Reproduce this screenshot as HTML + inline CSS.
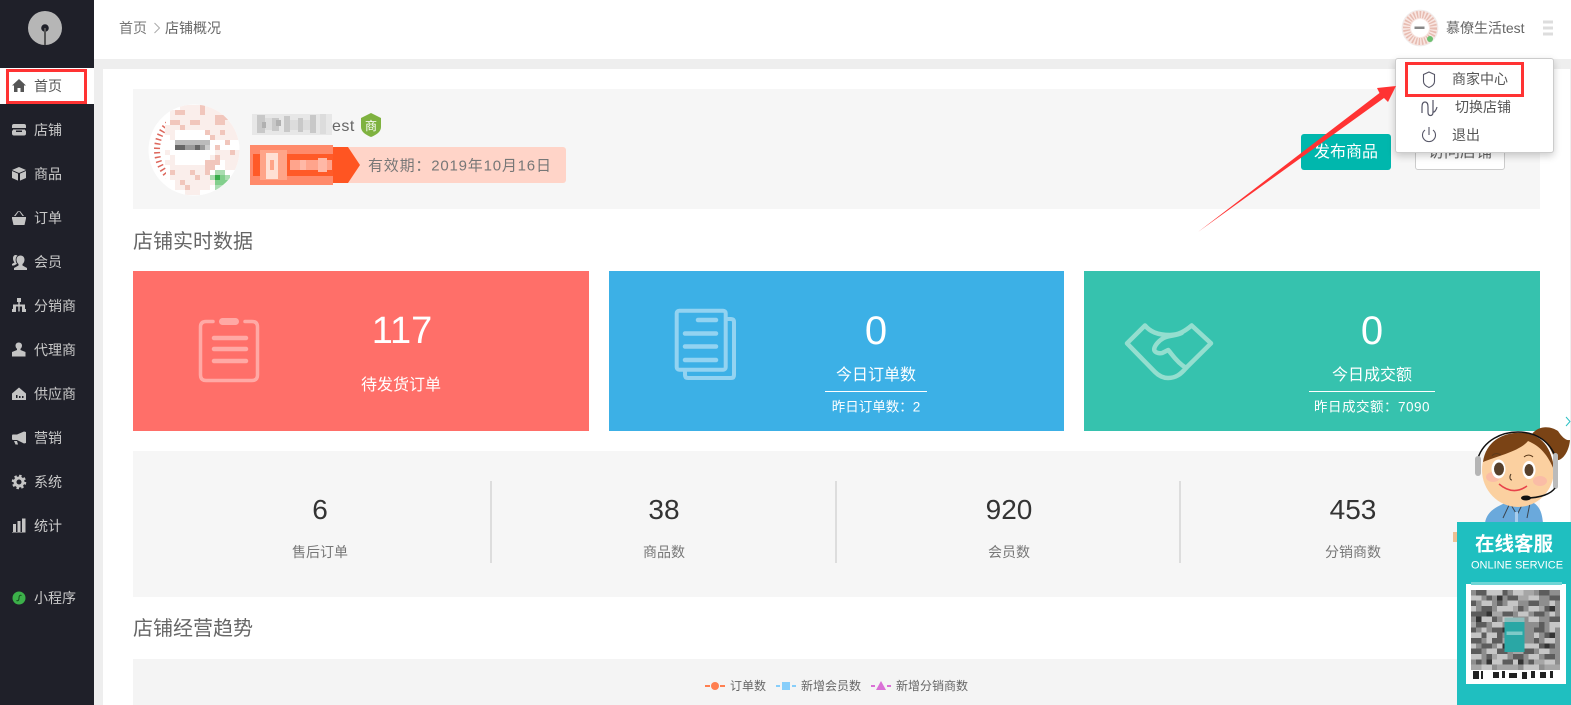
<!DOCTYPE html>
<html lang="zh"><head><meta charset="utf-8"><title>店铺概况</title>
<style>
*{box-sizing:border-box}
html,body{margin:0;padding:0;width:1571px;height:705px;overflow:hidden;background:#eee;font-family:"Liberation Sans","Noto Sans CJK SC",sans-serif}
.a{position:absolute}
.t{position:absolute;white-space:nowrap;line-height:1;transform:translateY(-50%)}
.c{position:absolute;white-space:nowrap;line-height:1;transform:translate(-50%,-50%)}
.m{font-size:14px;color:#c9c9c9;left:34px}
.w{color:#fff}
svg{position:absolute;left:0;top:0;overflow:visible}
</style></head><body>

<div class="a" style="left:103px;top:69px;width:1468px;height:636px;background:#fff"></div>
<div class="a" style="left:94px;top:0;width:1477px;height:59px;background:#fff"></div>
<div class="a" style="left:1570px;top:69px;width:1px;height:636px;background:#eee"></div>
<div class="a" style="left:0;top:0;width:94px;height:705px;background:#1f2029"></div>
<div class="a" style="left:0;top:68px;width:94px;height:36px;background:#fff"></div>
<div class="a" style="left:6px;top:69px;width:81px;height:35px;border:3px solid #f33"></div>

<div class="t m" style="top:86px;color:#555">首页</div>
<div class="t m" style="top:130px">店铺</div>
<div class="t m" style="top:174px">商品</div>
<div class="t m" style="top:218px">订单</div>
<div class="t m" style="top:262px">会员</div>
<div class="t m" style="top:306px">分销商</div>
<div class="t m" style="top:350px">代理商</div>
<div class="t m" style="top:394px">供应商</div>
<div class="t m" style="top:438px">营销</div>
<div class="t m" style="top:482px">系统</div>
<div class="t m" style="top:526px">统计</div>
<div class="t m" style="top:598px">小程序</div>

<div class="t" style="left:119px;top:28px;font-size:14px;color:#777">首页</div>
<svg width="1571" height="705" style="pointer-events:none"><path d="M154.500 23l5 5-5 5" fill="none" stroke="#aaa" stroke-width="1"/></svg>
<div class="t" style="left:165px;top:28px;font-size:14px;color:#666">店铺概况</div>
<div class="t" style="left:1446px;top:28px;font-size:14px;color:#666">慕僚生活test</div>

<!-- panels -->
<div class="a" style="left:133px;top:89px;width:1407px;height:120px;background:#f6f6f6"></div>
<div class="a" style="left:250px;top:147px;width:316px;height:36px;background:#ffd4c8;border-radius:3px"></div>
<div class="t" style="left:368px;top:166px;font-size:15px;letter-spacing:.8px;color:#777">有效期：2019年10月16日</div>
<div class="t" style="left:332px;top:127px;font-size:16px;letter-spacing:.5px;color:#666">est</div>
<div class="a" style="left:1301px;top:134px;width:90px;height:36px;background:#00b7ad;border-radius:3px"></div>
<div class="c w" style="left:1346px;top:153px;font-size:16px">发布商品</div>
<div class="a" style="left:1415px;top:134px;width:90px;height:36px;background:#fff;border:1px solid #ccc;border-radius:3px"></div>
<div class="c" style="left:1460px;top:153px;font-size:16px;color:#666">访问店铺</div>

<div class="t" style="left:133px;top:242px;font-size:20px;color:#666">店铺实时数据</div>
<div class="a" style="left:133px;top:271px;width:456px;height:160px;background:#ff6f69"></div>
<div class="a" style="left:609px;top:271px;width:455px;height:160px;background:#3cb0e6"></div>
<div class="a" style="left:1084px;top:271px;width:456px;height:160px;background:#36c2ae"></div>

<div class="c w" style="left:402px;top:331px;font-size:38px">117</div>
<div class="c w" style="left:401px;top:386px;font-size:16px">待发货订单</div>
<div class="c w" style="left:876px;top:331px;font-size:40px">0</div>
<div class="c w" style="left:876px;top:376px;font-size:16px">今日订单数</div>
<div class="a" style="left:825px;top:391px;width:102px;height:1px;background:#fff"></div>
<div class="c w" style="left:876px;top:407px;font-size:13.500px">昨日订单数：2</div>
<div class="c w" style="left:1372px;top:331px;font-size:40px">0</div>
<div class="c w" style="left:1372px;top:376px;font-size:16px">今日成交额</div>
<div class="a" style="left:1309px;top:391px;width:126px;height:1px;background:#fff"></div>
<div class="c w" style="left:1372px;top:407px;font-size:13.500px;letter-spacing:.5px">昨日成交额：7090</div>

<div class="a" style="left:133px;top:451px;width:1407px;height:146px;background:#f6f6f6"></div>
<div class="a" style="left:490px;top:481px;width:2px;height:82px;background:#ddd"></div>
<div class="a" style="left:835px;top:481px;width:2px;height:82px;background:#ddd"></div>
<div class="a" style="left:1179px;top:481px;width:2px;height:82px;background:#ddd"></div>
<div class="c" style="left:320px;top:510px;font-size:28px;color:#333">6</div>
<div class="c" style="left:664px;top:510px;font-size:28px;color:#333">38</div>
<div class="c" style="left:1009px;top:510px;font-size:28px;color:#333">920</div>
<div class="c" style="left:1353px;top:510px;font-size:28px;color:#333">453</div>
<div class="c" style="left:320px;top:552px;font-size:14px;color:#777">售后订单</div>
<div class="c" style="left:664px;top:552px;font-size:14px;color:#777">商品数</div>
<div class="c" style="left:1009px;top:552px;font-size:14px;color:#777">会员数</div>
<div class="c" style="left:1353px;top:552px;font-size:14px;color:#777">分销商数</div>

<div class="t" style="left:133px;top:629px;font-size:20px;color:#666">店铺经营趋势</div>
<div class="a" style="left:133px;top:659px;width:1407px;height:46px;background:#f4f4f4"></div>
<div class="t" style="left:730px;top:686px;font-size:12px;color:#666">订单数</div>
<div class="t" style="left:801px;top:686px;font-size:12px;color:#666">新增会员数</div>
<div class="t" style="left:896px;top:686px;font-size:12px;color:#666">新增分销商数</div>

<!-- main graphics -->
<svg width="1571" height="705" viewBox="0 0 1571 705">
 <defs><clipPath id="av"><circle cx="194" cy="150" r="45.500"/></clipPath></defs>
 <!-- logo -->
 <circle cx="45" cy="28" r="17" fill="#b6b6b6"/>
 <circle cx="45" cy="28" r="3.800" fill="#1f2029"/><rect x="44" y="28" width="2" height="17" fill="#555"/>

 <!-- sidebar icons -->
 <path d="M19 79l-7 6.500h2v6.500h3.500v-4h3v4H24v-6.500h2z" fill="#555"/>
 <g fill="#c4c4c4">
  <path d="M14 124h10q2 0 2 2v2H12v-2q0-2 2-2zM13 129.500h12v1h1v3q0 2-2 2H14q-2 0-2-2v-3h1zM16 130.500v1.500h6v-1.500z"/>
  <path d="M19 167l7 3-7 3-7-3zM12 171l6 2.600v7l-6-2.600zM26 171l-6 2.600v7l6-2.600z"/>
  <path d="M12 217h14v1.500l-1.500 6.500h-11L12 218.500zM14 216l4-5h1l-3.500 5zM24 216l-4-5h-1l3.500 5z"/>
  <path d="M20.500 255.500c2.600 0 4 2 4 4.200 0 2-1 3.500-2 4.300v1.500l4.500 2.500v2H14v-2l4.500-2.500V264c-1-.8-2-2.300-2-4.300 0-2.200 1.400-4.200 4-4.200zM15.500 255c1 0 1.500.3 2 .8-1.500 1-2 3-1.800 4.800.1 1 .6 2.400 1.300 3.300l-3 1.600H12v-1.500l2.500-1.600C13.500 261.500 13 260 13 258.500c0-2 1-3.500 2.500-3.500z"/>
  <path d="M17 298h4v4h-1.300v2.500H25v7h-3v-5h-2.300v5h-1.400v-5H16v5h-3v-7h5.300V302H17zM12 309h4v3h-4zM22 309h4v3h-4z"/>
  <path d="M19 342.500a3 3 0 0 1 3 3c0 1.500-.7 2.600-1.500 3.300v1.200l5 2V356.500H12V352l5-2v-1.200c-.8-.7-1.500-1.800-1.500-3.300a3 3 0 0 1 3-3z"/>
  <path d="M19 387.500l7 6v6.500H12v-6.500zM16 395v3h1.500v-3zM19 396v2h1.500v-2zM22 396v2h1.500v-2z" fill-rule="evenodd"/>
  <path d="M24 431.500l2 .5v11l-2 .5-7-3.500h-4.500l-.5-1v-3.500l.5-1H17zM14 441h3l1 3.500h-2.500z"/>
  <circle cx="19" cy="482" r="4" fill="none" stroke="#c4c4c4" stroke-width="3"/>
  <circle cx="19" cy="482" r="6" fill="none" stroke="#c4c4c4" stroke-width="2.500" stroke-dasharray="2.400 2.300"/>
  <path d="M13 524h3v8h-3zM17.500 521h3v11h-3zM22 518.500h3.500V532H22z"/>
 </g>
 <path d="M12 532.500h13.500v.5H12z" fill="#c4c4c4"/>
 <circle cx="19" cy="598" r="6.500" fill="#3cb04a"/>
 <path d="M21.500 595.500c-2-1-2.500 1-2.500 2.500s-.5 3.500-2.500 2.500" fill="none" stroke="#154f1c" stroke-width="1"/>

 <!-- hamburger -->
 <path d="M1543 22h10M1543 28h10M1543 34h10" stroke="#ddd" stroke-width="3"/>
 <!-- top avatar -->
 <circle cx="1420" cy="28" r="18" fill="#f8e6e2" stroke="#eee" stroke-width=".8"/>
 <circle cx="1420" cy="28" r="13.500" fill="none" stroke="#e0a99c" stroke-width="7" stroke-dasharray="1.500 1.500" opacity=".7"/>
 <circle cx="1420" cy="28" r="9" fill="#fff"/><rect x="1414.500" y="26.500" width="10" height="2.500" fill="#888"/>
 <circle cx="1430" cy="39" r="3" fill="#6cc070"/>

 <!-- big avatar -->
 <circle cx="194" cy="150" r="45.500" fill="#fff"/>
 <path d="M149 150a45 45 0 0 1 8-25" fill="none"/>
 <circle cx="194" cy="150" r="37" fill="none" stroke="#d9574a" stroke-width="6" stroke-dasharray="1.500 3" opacity=".9"/>
 <g clip-path="url(#av)">
 <rect x="166" y="105" width="74" height="90" fill="#fff"/>
 <g fill="none" stroke-width="5">
  <path stroke="#faeeeb" d="M180 107.500h40M170 112.500h60M170 117.500h65M170 122.500h70M165 127.500h75M165 132.500h10M210 132.500h30M170 137.500h5M215 137.500h25M165 152.500h5M215 152.500h25M170 157.500h5M210 157.500h30M165 162.500h10M225 162.500h15M170 167.500h35M225 167.500h15M175 172.500h35M170 177.500h45M175 182.500h40M175 187.500h35M185 192.500h15"/>
  <path stroke="#f1c6bc" d="M175 112.500h10M200 107.500h5M200 112.500h5M215 117.500h15M170 122.500h10M190 122.500h10M215 122.500h10M180 127.500h5M205 132.500h5M220 132.500h5M210 137.500h5M225 142.500h5M215 147.500h5M230 152.500h5M215 157.500h5M205 162.500h15M205 167.500h10M170 172.500h5M190 172.500h5M205 172.500h5M180 182.500h5M195 177.500h5M185 187.500h5"/>
  <path stroke="#bbb" d="M175 142.500h35"/><path stroke="#666" d="M175 147.500h10M195 147.500h5"/><path stroke="#999" d="M185 147.500h10M200 147.500h5"/><path stroke="#ccc" d="M205 147.500h5"/>
  <path stroke="#a9dcb0" d="M215 172.500h10M210 177.500h5M225 177.500h5M215 187.500h10"/>
  <path stroke="#82cf8c" d="M215 182.500h15M220 177.500h5"/><path stroke="#36ad4a" d="M215 177.500h5"/>
 </g>
 </g>

 <!-- name mosaic -->
 <g><rect x="252" y="114" width="80" height="21" fill="#e7e7e7"/>
  <path d="M257 115h8v18h-8zM272 118h7v13h-7zM284 116h6v16h-6zM298 118h5v14h-5zM310 115h6v18h-6z" fill="#c8c8c8"/>
  <path d="M265 118h7v12h-7zM290 120h8v10h-8zM303 120h7v10h-7zM320 114h6v20h-6z" fill="#dcdcdc"/>
  <path d="M276 120h5v6h-5zM262 122h4v6h-4z" fill="#b0b0b0"/>
 </g>
 <path d="M371 113l10 5v9c0 5-5 8-10 10-5-2-10-5-10-10v-9z" fill="#7fb240"/>

 <!-- version badge -->
 <path d="M250 147h98l12 18-12 18h-98z" fill="#ff5522"/>
 <rect x="250" y="145" width="83" height="40" fill="#ff8a6b"/>
 <rect x="253" y="154" width="80" height="22" fill="#ff5a28"/>
 <rect x="260" y="150" width="27" height="30" fill="#ffa488"/>
 <rect x="266" y="153" width="12" height="26" fill="#ffe0d4"/><rect x="270" y="160" width="4" height="10" fill="#ffa488"/>
 <rect x="290" y="160" width="42" height="10" fill="#ffa48c"/>
 <path d="M300 160h6v10h-6zM318 158h9v14h-9z" fill="#ffb8a6"/>

 <!-- clipboard -->
 <g fill="none" stroke="#ffa9a5" stroke-width="3.500" stroke-linecap="round" stroke-linejoin="round">
  <path d="M213 321.500h-7q-5.500 0-5.500 5.500v48q0 5.500 5.500 5.500h46q5.500 0 5.500-5.500v-48q0-5.500-5.500-5.500h-7"/>
 </g>
 <rect x="219" y="318" width="20" height="7" rx="3.500" fill="#ffa9a5"/>
 <path d="M214 338h32M214 349h32M214 361h32" stroke="#ffa9a5" stroke-width="4.500" stroke-linecap="round"/>

 <!-- docs -->
 <g fill="none" stroke="#93d3f1" stroke-width="4" stroke-linejoin="round">
  <rect x="676.700" y="310.700" width="49" height="59" rx="2.500"/>
  <path d="M727 319h4q3 0 3 3v53q0 3-3 3h-43q-3 0-3-3v-4"/>
 </g>
 <path d="M698 320h18M685 333.500h31M685 346.500h31M685 360h31" stroke="#93d3f1" stroke-width="4.500" stroke-linecap="round"/>

 <!-- handshake -->
 <g fill="none" stroke="#94decf" stroke-width="4.500" stroke-linejoin="round" stroke-linecap="round">
  <path d="M1127 343.300L1145 325.500c5 6 12 9.500 25 9.500 9 0 15-4 21.700-9.500L1211 343.300 1186 368c-5 6-10 10-18 10-5 0-9-2-13-6z"/>
  <path d="M1181.700 333c-6 3-12 2-18 5-4 2-9 7-9.500 11-.3 3 4 5 8 4l6-3c3 3 8 12 18 18"/>
 </g>

 <!-- legend -->
 <path d="M705 686h5M720 686h5" stroke="#ff7f50" stroke-width="2"/><circle cx="715" cy="686" r="4" fill="#ff7f50"/>
 <path d="M776 686h4M792 686h4" stroke="#87cefa" stroke-width="2"/><rect x="782" y="682" width="8" height="8" fill="#87cefa"/>
 <path d="M871 686h4M887 686h4" stroke="#da70d6" stroke-width="2"/><path d="M881 681l5 9h-10z" fill="#da70d6"/>
</svg>

<!-- dropdown -->
<div class="a" style="left:1395px;top:58px;width:159px;height:95px;background:#fff;border:1px solid #ccc;border-radius:3px;box-shadow:0 3px 8px rgba(0,0,0,.2)"></div>
<div class="a" style="left:1405px;top:62px;width:119px;height:35px;border:3px solid #f33"></div>
<div class="t" style="left:1452px;top:79px;font-size:14px;color:#555">商家中心</div>
<div class="t" style="left:1455px;top:107px;font-size:14px;color:#555">切换店铺</div>
<div class="t" style="left:1452px;top:135px;font-size:14px;color:#555">退出</div>

<svg width="1571" height="705" viewBox="0 0 1571 705">
 <path d="M1429 72l5.500 2.500v7c0 3-3 5-5.500 6-2.500-1-5.500-3-5.500-6v-7z" fill="none" stroke="#556" stroke-width="1.100"/>
 <path d="M1422 113v-6c0-3 1-5 3-5s3 2 3 5v5c0 2.500 1 3.500 2.500 3.500s2.500-1 2.500-3.500v-12M1433 112c1 .5 3-1 4-5" fill="none" stroke="#556" stroke-width="1.200"/>
 <path d="M1425 130a6.500 6.500 0 1 0 8 0M1429 127v8" fill="none" stroke="#556" stroke-width="1.100"/>
 <!-- red arrow -->
 <path d="M1198 232L1379.500 93 1377 88 1396 86 1388 102 1384 98z" fill="#f33"/>
</svg>

<!-- service widget -->
<svg width="1571" height="705" viewBox="0 0 1571 705">
 <path d="M1566 417l4 4.500-4 4.500" fill="none" stroke="#2cc0c4" stroke-width="1"/>
 <!-- ponytail -->
 <path d="M1532 434C1540 424 1552 427 1558 431 1562 437 1566 441 1570 440 1569 452 1562 462 1555 460 1551 448 1545 438 1532 434Z" fill="#7a4315"/>
 <!-- body -->
 <path d="M1485 523C1487 510 1498 506 1510 501L1530 501C1540 505 1542 513 1543 523Z" fill="#6aa9dc"/>
 <path d="M1510 503l-7 15M1510 503l7 12 6-12M1530 503l-3 15" fill="none" stroke="#3c4650" stroke-width="1"/>
 <path d="M1515 512h3v10h-3z" fill="#a9cdec"/>
 <!-- head -->
 <ellipse cx="1518" cy="470" rx="36" ry="37" fill="#fbd0a0"/>
 <path d="M1483 462C1486 440 1505 431 1525 433 1541 435 1552 447 1554 470 1548 455 1540 446 1528 441 1520 451 1498 456 1483 462Z" fill="#7a4315"/>
 <path d="M1478 458C1484 440 1502 432 1518 432 1537 432 1550 442 1556 458" fill="none" stroke="#111" stroke-width="1.500"/>
 <rect x="1475" y="456" width="6" height="20" rx="3" fill="#b5b5b5"/>
 <rect x="1553" y="453" width="5" height="36" rx="2.500" fill="#bbb"/>
 <path d="M1555 488C1551 494 1540 498 1526 498" fill="none" stroke="#111" stroke-width="1.500"/>
 <ellipse cx="1526" cy="498" rx="5" ry="2.500" fill="#111"/>
 <ellipse cx="1493" cy="477" rx="7" ry="5" fill="#f9b3a8" opacity=".7"/>
 <ellipse cx="1540" cy="481" rx="7" ry="5" fill="#f9b3a8" opacity=".7"/>
 <ellipse cx="1498.500" cy="469" rx="7" ry="9.500" fill="#fff"/>
 <ellipse cx="1529" cy="470" rx="6.500" ry="9" fill="#fff"/>
 <ellipse cx="1499" cy="469" rx="5" ry="6.500" fill="#57402b"/>
 <ellipse cx="1529" cy="470" rx="4.500" ry="6" fill="#57402b"/>
 <path d="M1492 456c2-3 6-3 9-1M1524 457c2-2 6-3 9 0" fill="none" stroke="#5c3a1a" stroke-width="1"/>
 <path d="M1511 474c-2 3-1 6 1 6" fill="none" stroke="#4a3520" stroke-width="1"/>
 <path d="M1499 484Q1513 496 1527 486" fill="none" stroke="#e8424a" stroke-width="1.500"/>
 <!-- hand -->
 <path d="M1453 532h5v10h-5z" fill="#eec093"/>
 <!-- panel -->
 <rect x="1457" y="522" width="114" height="183" fill="#1fbfc0"/>
 <rect x="1466" y="584" width="100" height="100" fill="#fff"/>
 <rect x="1471" y="582" width="91" height="3" fill="#6fd5d5"/>
 <path d="M1473 671h6v8h-6zM1481 671h2v8h-2zM1493 672h6v6h-6zM1502 671h3v7h-3zM1509 673h8v5h-8zM1522 672h5v7h-5zM1531 671h4v7h-4zM1540 672h6v6h-6zM1550 671h3v7h-3z" fill="#222"/>
</svg>

<svg style="left:1471px;top:590px" width="89" height="80" viewBox="0 0 17 15" preserveAspectRatio="none" shape-rendering="crispEdges">
 <rect width="17" height="15" fill="#8e8e8e"/>
 <g fill="none" stroke-width="1">
  <path stroke="#5c5c5c" d="M1 .5h2M6 .5h1M13 .5h2M3 1.500h1M7 1.500h2M15 1.500h2M0 2.500h1M5 2.500h1M11 2.500h2M2 3.500h2M9 3.500h1M14 3.500h1M0 4.500h3M6 4.500h2M12 4.500h2M4 5.500h1M15 5.500h2M1 6.500h2M13 6.500h1M0 7.500h1M4 7.500h2M12 7.500h2M2 8.500h1M5 8.500h1M14 8.500h2M0 9.500h2M4 9.500h2M12 9.500h1M2 10.500h2M7 10.500h2M13 10.500h3M0 11.500h2M5 11.500h2M10 11.500h2M3 12.500h1M8 12.500h2M14 12.500h2M1 13.500h1M6 13.500h2M11 13.500h2"/>
  <path stroke="#333" d="M5 1.500h1M15 3.500h1M1 5.500h1M3 4.500h1M6 7.500h1M15 8.500h1M6 10.500h1M14 10.500h1M3 13.500h1M9 13.500h1"/>
  <path stroke="#c6c6c6" d="M3 .5h3M8 .5h2M0 1.500h2M11 1.500h2M2 2.500h2M7 2.500h2M15 2.500h1M5 3.500h3M11 3.500h2M0 3.500h1M9 4.500h2M15 4.500h1M2 5.500h2M6 5.500h2M11 5.500h2M4 6.500h2M15 6.500h2M2 7.500h1M15 7.500h1M0 8.500h2M3 8.500h2M12 8.500h1M3 9.500h1M14 9.500h2M0 10.500h1M5 10.500h1M10 10.500h3M3 11.500h2M13 11.500h2M0 12.500h2M5 12.500h2M11 12.500h2M4 13.500h2M8 13.500h1M14 13.500h2M2 14.500h2M10 14.500h3"/>
  <path stroke="#a6a6a6" d="M10 .5h2M9 1.500h2M13 3.500h1M8 3.500h1M4 4.500h2M0 6.500h1M7 6.500h1M6 9.500h1M9 10.500h1M8 11.500h2M4 12.500h1M12 13.500h2M0 14.500h2M5 14.500h4M14 14.500h3"/>
 </g>
 <rect x="6.400" y="5.200" width="3.800" height="1" fill="#8fbcbb"/>
 <rect x="6.400" y="6" width="3.800" height="5.600" fill="#2aa7a5"/>
 <rect x="6.800" y="7.800" width="3" height=".6" fill="#7fcac8"/>
</svg>

<div class="c w" style="left:1514px;top:545px;font-size:19.500px;font-weight:bold">在线客服</div>
<div class="c w" style="left:1517px;top:566px;font-size:11px">ONLINE SERVICE</div>

<div class="c w" style="left:371px;top:126px;font-size:12px">商</div>
</body></html>
